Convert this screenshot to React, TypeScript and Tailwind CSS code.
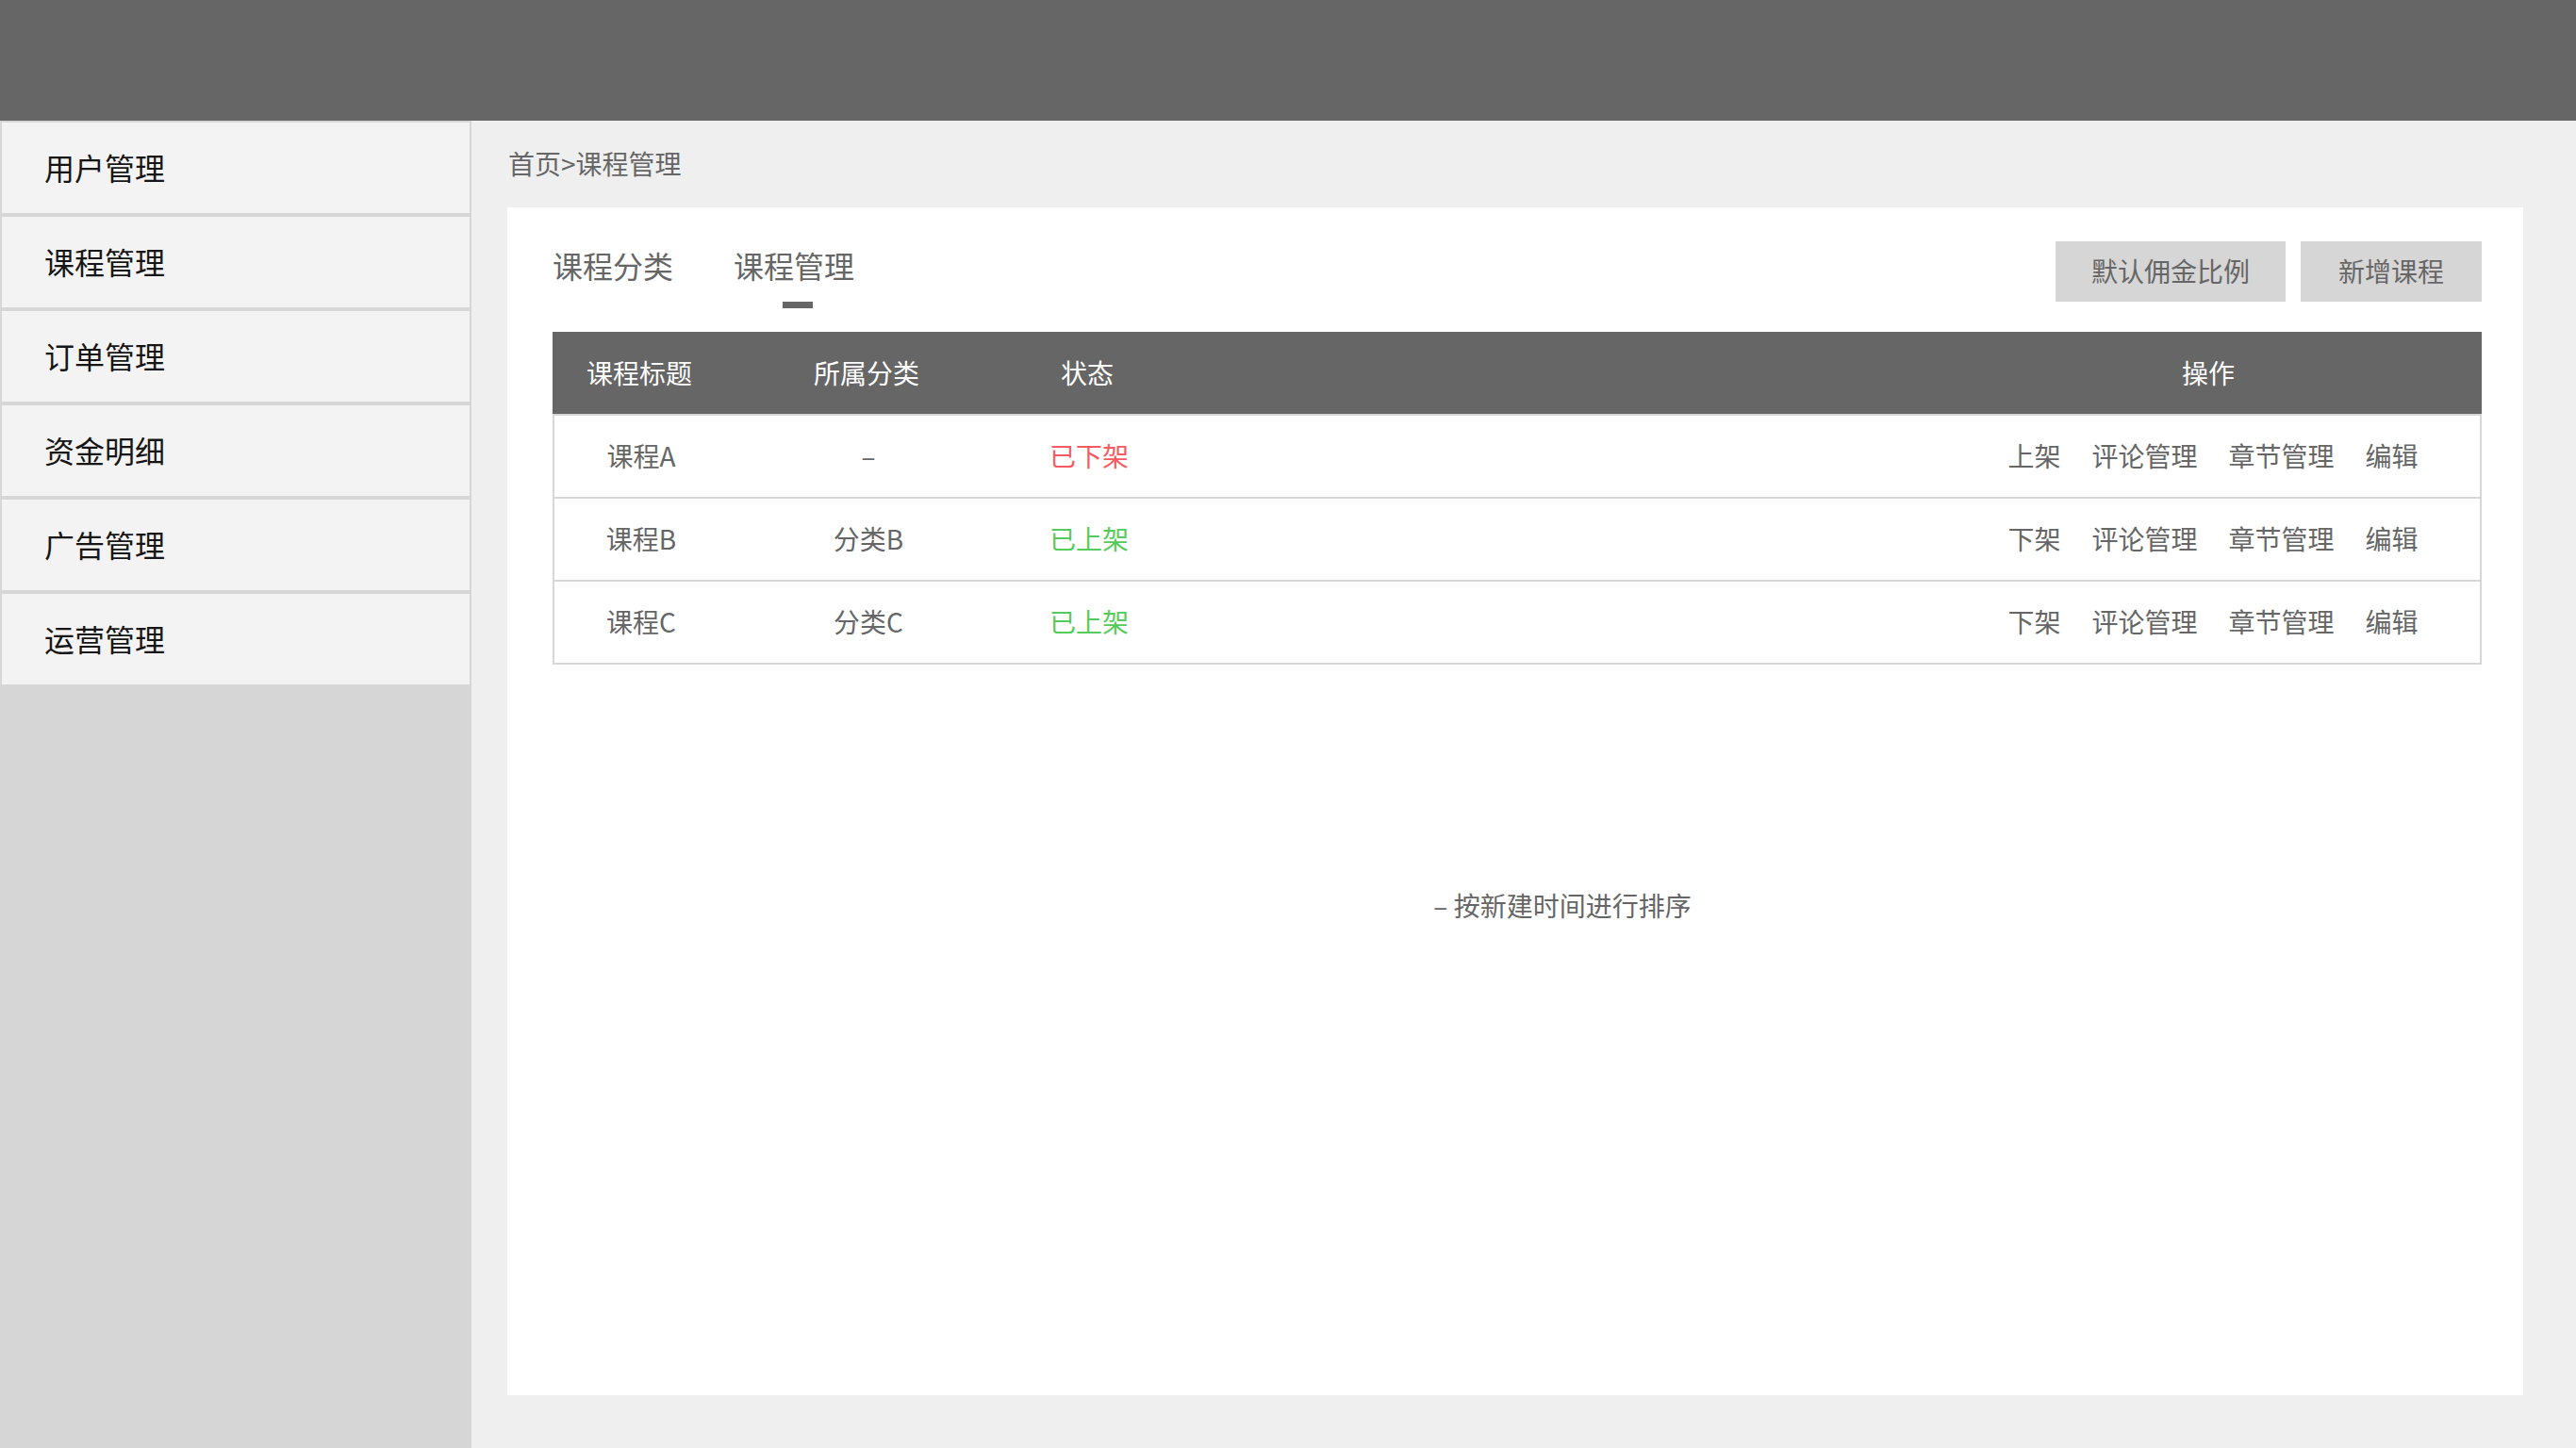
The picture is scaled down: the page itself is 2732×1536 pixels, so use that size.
import React from "react";

interface Course {
  title: string;
  category: string;
  online: boolean;
}

const menu = ["用户管理", "课程管理", "订单管理", "资金明细", "广告管理", "运营管理"];

const courses: Course[] = [
  { title: "课程A", category: "–", online: false },
  { title: "课程B", category: "分类B", online: true },
  { title: "课程C", category: "分类C", online: true },
];

const cols = "grid grid-cols-[184px_298px_170px_1fr_580px] items-center";

function Sidebar() {
  return (
    <aside className="w-[500px] shrink-0 bg-[#d6d6d6] pl-[2px] pr-[2px] pt-[2px] flex flex-col gap-[4px]">
      {menu.map((item) => (
        <div
          key={item}
          className="h-[96px] bg-[#f3f3f3] flex items-center pl-[45px] pb-[3px] text-[32px] leading-[40px] text-[#161616]"
        >
          {item}
        </div>
      ))}
    </aside>
  );
}

function CourseTable() {
  return (
    <div className="w-full">
      <div className={`${cols} h-[87px] pb-[2px] bg-[#666666] text-white text-[28px] leading-[36px]`}>
        <div className="text-center">课程标题</div>
        <div className="text-center">所属分类</div>
        <div className="text-center">状态</div>
        <div />
        <div className="text-center">操作</div>
      </div>
      <div className="border-x-2 border-[#d6d6d6]">
        {courses.map((c) => (
          <div
            key={c.title}
            className={`${cols} h-[88px] pb-[3px] border-t-2 border-[#d6d6d6] last:border-b-2 last:h-[90px] text-[28px] leading-[36px] text-[#666666]`}
          >
            <div className="text-center">{c.title}</div>
            <div className="text-center">{c.category}</div>
            <div className={`text-center ${c.online ? "text-[#55cb5c]" : "text-[#f65a64]"}`}>
              {c.online ? "已上架" : "已下架"}
            </div>
            <div />
            <div className="flex justify-center gap-[33px] pl-[14px]">
              <span>{c.online ? "下架" : "上架"}</span>
              <span>评论管理</span>
              <span>章节管理</span>
              <span>编辑</span>
            </div>
          </div>
        ))}
      </div>
    </div>
  );
}

export default function App() {
  return (
    <div
      className="w-[2732px] h-[1536px] flex flex-col bg-[#efefef] overflow-hidden"
      style={{ fontFamily: '"Noto Sans CJK SC", "Noto Sans", sans-serif' }}
    >
      <header className="h-[128px] shrink-0 bg-[#666666]" />
      <div className="flex flex-1 min-h-0">
        <Sidebar />
        <main className="flex-1 flex flex-col pl-[38px] pr-[56px] pb-[56px]">
          <div className="h-[92px] flex items-center pb-[2px] text-[28px] leading-[36px] text-[#666666] pl-[1px]">
            首页&gt;课程管理
          </div>
          <section className="flex-1 bg-white pl-[48px] pr-[44px] pt-[36px]">
            <div className="flex items-start justify-between h-[96px]">
              <div className="flex gap-[64px] pt-[5px] text-[32px] leading-[40px] text-[#666666]">
                <div className="flex flex-col items-center">
                  <span>课程分类</span>
                </div>
                <div className="flex flex-col items-center">
                  <span>课程管理</span>
                  <span className="mt-[19px] ml-[7px] w-[32px] h-[7px] bg-[#666666]" />
                </div>
              </div>
              <div className="flex gap-[16px] text-[28px] leading-[36px] text-[#666666]">
                <button className="w-[244px] h-[64px] pb-[3px] bg-[#d6d6d6] flex items-center justify-center">
                  默认佣金比例
                </button>
                <button className="w-[192px] h-[64px] pb-[3px] bg-[#d6d6d6] flex items-center justify-center">
                  新增课程
                </button>
              </div>
            </div>
            <CourseTable />
            <div className="mt-[235px] flex justify-center pl-[96px] text-[28px] leading-[40px] text-[#666666]">
              – 按新建时间进行排序
            </div>
          </section>
        </main>
      </div>
    </div>
  );
}
